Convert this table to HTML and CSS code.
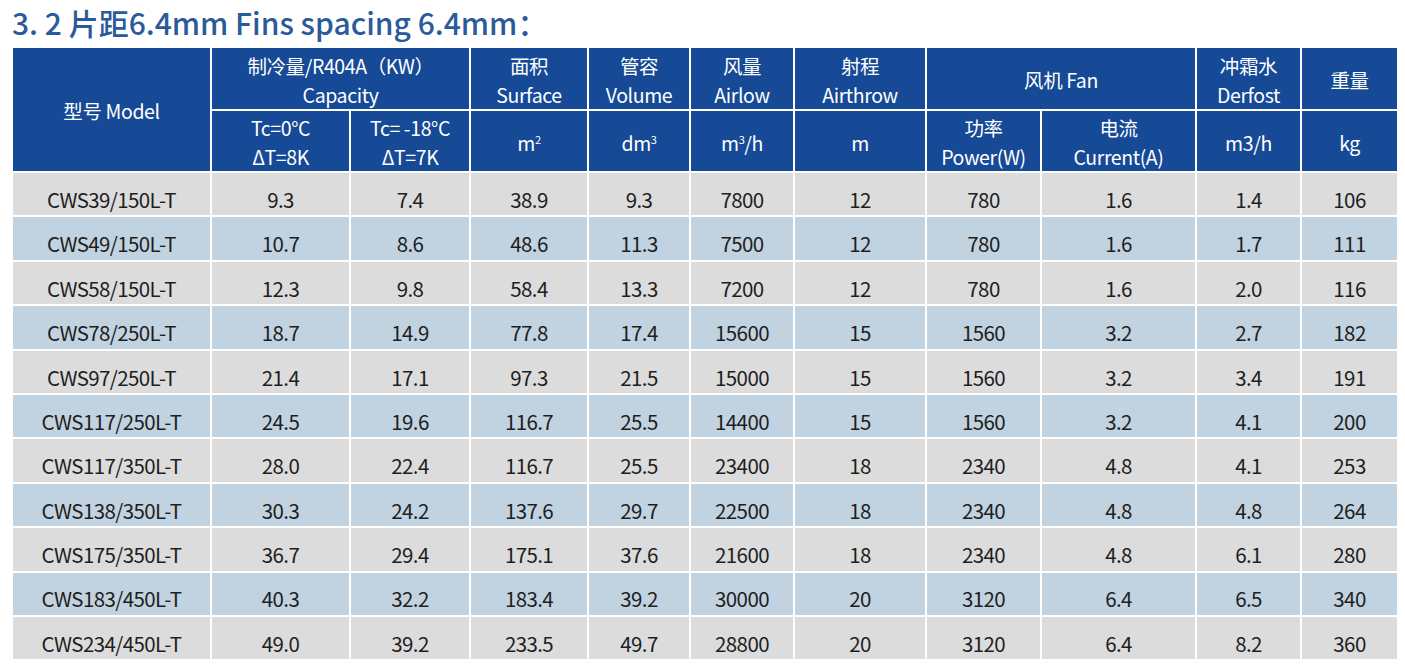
FILE: index.html
```html
<!DOCTYPE html>
<html lang="zh">
<head>
<meta charset="utf-8">
<link rel="stylesheet" href="styles.css">
</head>
<body>
<div class="page">
  <h1 class="title">3. 2 片距6.4mm Fins spacing 6.4mm：</h1>
  <table class="spec">
    <colgroup>
      <col style="width:199px"><col style="width:139px"><col style="width:120px"><col style="width:118px"><col style="width:102px"><col style="width:104px"><col style="width:132px"><col style="width:115px"><col style="width:155px"><col style="width:105px"><col style="width:97px">
    </colgroup>
    <thead>
      <tr class="h1">
        <th rowspan="2">型号 Model</th>
        <th colspan="2">制冷量/R404A（KW）<br>Capacity</th>
        <th>面积<br>Surface</th>
        <th>管容<br>Volume</th>
        <th>风量<br>Airlow</th>
        <th>射程<br>Airthrow</th>
        <th colspan="2">风机 Fan</th>
        <th>冲霜水<br>Derfost</th>
        <th>重量</th>
      </tr>
      <tr class="h2">
        <th>Tc=0°C<br>ΔT=8K</th>
        <th>Tc= -18°C<br>ΔT=7K</th>
        <th>m<sup>2</sup></th>
        <th>dm<sup>3</sup></th>
        <th>m<sup>3</sup>/h</th>
        <th>m</th>
        <th>功率<br>Power(W)</th>
        <th>电流<br>Current(A)</th>
        <th>m3/h</th>
        <th>kg</th>
      </tr>
    </thead>
    <tbody>
      <tr><td>CWS39/150L-T</td><td>9.3</td><td>7.4</td><td>38.9</td><td>9.3</td><td>7800</td><td>12</td><td>780</td><td>1.6</td><td>1.4</td><td>106</td></tr>
      <tr><td>CWS49/150L-T</td><td>10.7</td><td>8.6</td><td>48.6</td><td>11.3</td><td>7500</td><td>12</td><td>780</td><td>1.6</td><td>1.7</td><td>111</td></tr>
      <tr><td>CWS58/150L-T</td><td>12.3</td><td>9.8</td><td>58.4</td><td>13.3</td><td>7200</td><td>12</td><td>780</td><td>1.6</td><td>2.0</td><td>116</td></tr>
      <tr><td>CWS78/250L-T</td><td>18.7</td><td>14.9</td><td>77.8</td><td>17.4</td><td>15600</td><td>15</td><td>1560</td><td>3.2</td><td>2.7</td><td>182</td></tr>
      <tr><td>CWS97/250L-T</td><td>21.4</td><td>17.1</td><td>97.3</td><td>21.5</td><td>15000</td><td>15</td><td>1560</td><td>3.2</td><td>3.4</td><td>191</td></tr>
      <tr><td>CWS117/250L-T</td><td>24.5</td><td>19.6</td><td>116.7</td><td>25.5</td><td>14400</td><td>15</td><td>1560</td><td>3.2</td><td>4.1</td><td>200</td></tr>
      <tr><td>CWS117/350L-T</td><td>28.0</td><td>22.4</td><td>116.7</td><td>25.5</td><td>23400</td><td>18</td><td>2340</td><td>4.8</td><td>4.1</td><td>253</td></tr>
      <tr><td>CWS138/350L-T</td><td>30.3</td><td>24.2</td><td>137.6</td><td>29.7</td><td>22500</td><td>18</td><td>2340</td><td>4.8</td><td>4.8</td><td>264</td></tr>
      <tr><td>CWS175/350L-T</td><td>36.7</td><td>29.4</td><td>175.1</td><td>37.6</td><td>21600</td><td>18</td><td>2340</td><td>4.8</td><td>6.1</td><td>280</td></tr>
      <tr><td>CWS183/450L-T</td><td>40.3</td><td>32.2</td><td>183.4</td><td>39.2</td><td>30000</td><td>20</td><td>3120</td><td>6.4</td><td>6.5</td><td>340</td></tr>
      <tr><td>CWS234/450L-T</td><td>49.0</td><td>39.2</td><td>233.5</td><td>49.7</td><td>28800</td><td>20</td><td>3120</td><td>6.4</td><td>8.2</td><td>360</td></tr>
    </tbody>
  </table>
</div>
</body>
</html>
```

FILE: styles.css
```css
html, body {
  margin: 0;
  padding: 0;
  background: #ffffff;
}
.page {
  padding: 2px 0 0 11px;
  font-family: "Noto Sans CJK SC", "Noto Sans", sans-serif;
}
.title {
  margin: 0 0 4px 1px;
  font-size: 30px;
  line-height: 40px;
  font-weight: 500;
  color: #2b5a9a;
}
.spec {
  border-collapse: collapse;
  table-layout: fixed;
  width: 1388px;
  border: 1px solid #d3dce8;
}
.spec th, .spec td {
  border: 2px solid #ffffff;
  text-align: center;
  vertical-align: middle;
  padding: 0;
}
.spec th {
  background: #164a96;
  color: #ffffff;
  font-weight: 400;
  font-size: 19.5px;
  line-height: 29px;
  letter-spacing: -0.4px;
}
.spec tr.h1 th { height: 59px; padding-top: 2px; }
.spec tr.h2 th { height: 57px; padding-top: 2px; }
.spec sup {
  font-size: 11px;
  line-height: 0;
  vertical-align: 7px;
}
.spec td {
  height: 32.9px;
  padding-top: 9.5px;
  font-size: 20.5px;
  line-height: 28px;
  letter-spacing: -0.6px;
  color: #1e1e1e;
  background: #dcdcdc;
}
.spec tbody tr:nth-child(even) td {
  background: #c1d2e0;
}
```
